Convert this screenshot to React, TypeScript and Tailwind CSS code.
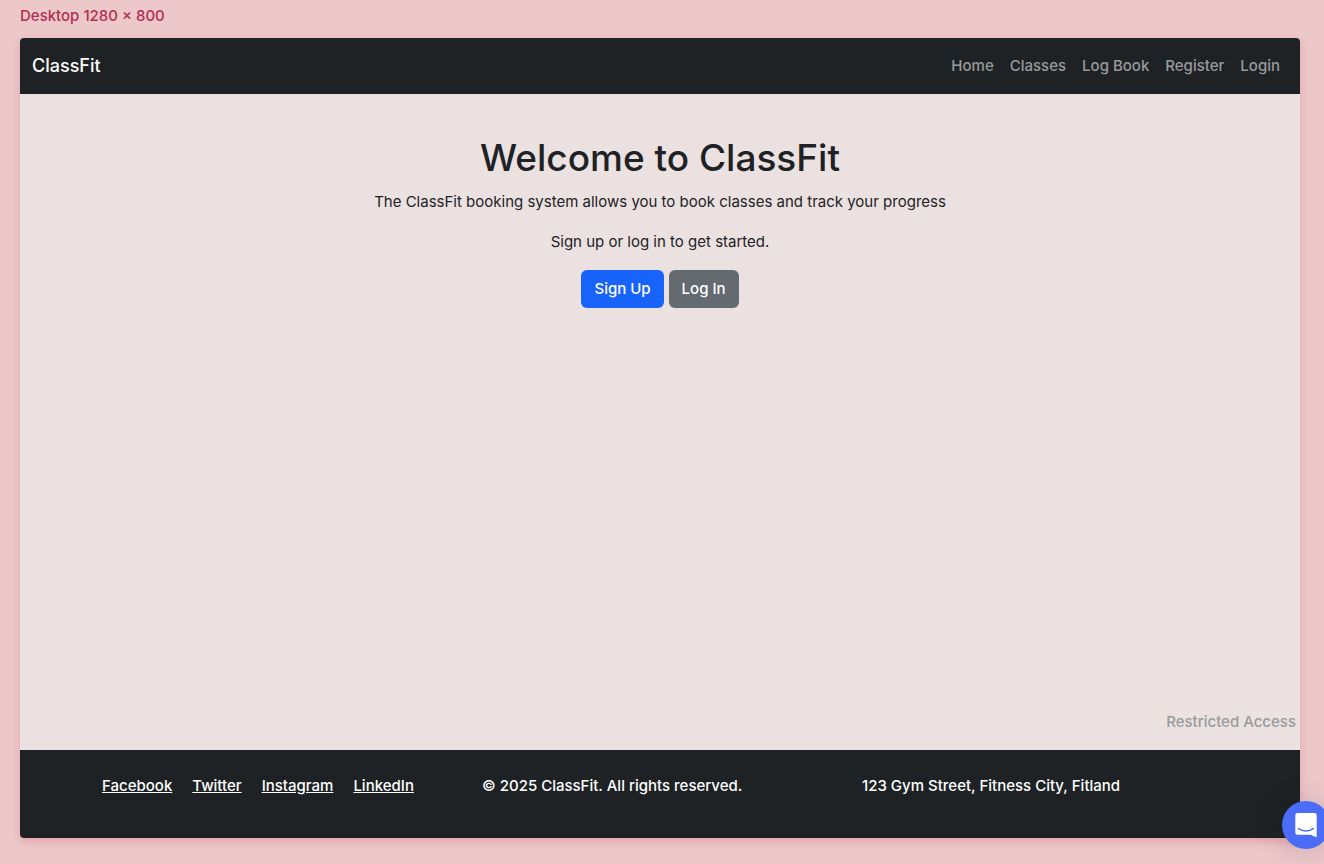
const navLinks = ["Home", "Classes", "Log Book", "Register", "Login"];
const socialLinks = ["Facebook", "Twitter", "Instagram", "LinkedIn"];

function Navbar() {
  return (
    <header className="flex items-center justify-between bg-[#1e2225] px-3 py-2">
      <a href="#home" className="py-1 text-lg leading-8 font-medium text-white">
        ClassFit
      </a>
      <nav className="flex font-medium">
        {navLinks.map((label) => (
          <a key={label} href="#" className="p-2 text-[#999a9b]">
            {label}
          </a>
        ))}
      </nav>
    </header>
  );
}

function Hero() {
  return (
    <main className="flex flex-1 flex-col items-center pt-10 text-center">
      <h1 className="mb-2 text-[37px] leading-12 font-medium">Welcome to ClassFit</h1>
      <p className="mb-4">The ClassFit booking system allows you to book classes and track your progress</p>
      <p className="mb-4">Sign up or log in to get started.</p>
      <div className="flex gap-[5px] font-medium text-white">
        <button type="button" className="rounded-md bg-[#1863fa] px-[13px] py-[7px]">
          Sign Up
        </button>
        <button type="button" className="rounded-md bg-[#636a70] px-[13px] py-[7px]">
          Log In
        </button>
      </div>
    </main>
  );
}

function Footer() {
  return (
    <footer className="bg-[#1e2225] pt-6 pb-10 font-medium text-white">
      <div className="mx-auto grid max-w-[1140px] grid-cols-3 gap-6 px-3">
        <div className="flex gap-5">
          {socialLinks.map((label) => (
            <a key={label} href="#" className="underline">
              {label}
            </a>
          ))}
        </div>
        <p>© 2025 ClassFit. All rights reserved.</p>
        <p>123 Gym Street, Fitness City, Fitland</p>
      </div>
    </footer>
  );
}

function ChatLauncher() {
  return (
    <button
      type="button"
      aria-label="Open chat"
      className="fixed -right-1.5 bottom-[15px] flex size-12 items-center justify-center rounded-full bg-[#4a6cf7] shadow-[0_2px_32px_rgba(0,0,0,0.16)]"
    >
      <svg viewBox="0 0 22 24" className="h-6 w-[22px]" aria-hidden="true">
        <path d="M2.500 0h17A2.200 2.200 0 0 1 21.700 2.200V24s-3-.7-6-2.300H2.500A2.200 2.200 0 0 1 .3 19.500V2.200A2.200 2.200 0 0 1 2.500 0z" fill="#fff" />
        <path d="M3.700 15.600c4 3.100 10.600 3.100 14.600 0" fill="none" stroke="#4a6cf7" strokeWidth="1.500" strokeLinecap="round" />
      </svg>
    </button>
  );
}

export default function App() {
  return (
    <div className="flex min-h-screen flex-col bg-[#ecc8cb] pt-1.5 pr-6 pb-[26px] pl-5 font-[Inter,sans-serif] text-[15px] leading-6 text-[#1e2225]">
      <p className="mb-3 leading-5 font-medium text-[#b32d54]">Desktop 1280 × 800</p>
      <div className="flex flex-1 flex-col overflow-hidden rounded-sm bg-[#eae1e0] shadow-[0_4px_8px_rgba(200,60,80,0.25)]">
        <Navbar />
        <Hero />
        <a href="#restricted" className="mr-1 mb-4 self-end font-medium text-[#999a9b]">
          Restricted Access
        </a>
        <Footer />
      </div>
      <ChatLauncher />
    </div>
  );
}
